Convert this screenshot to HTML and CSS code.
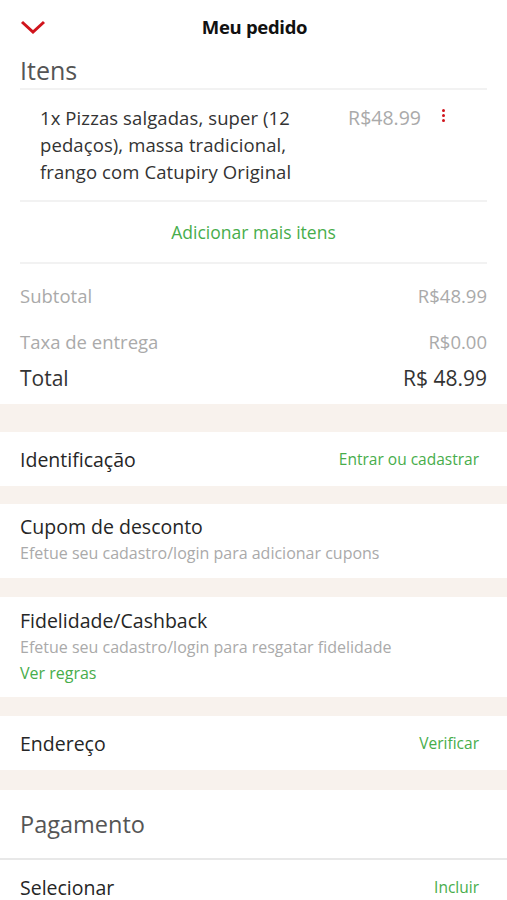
FILE: index.html
```html
<!DOCTYPE html>
<html lang="pt-BR">
<head>
    <meta charset="UTF-8">
    <meta name="viewport" content="width=device-width, initial-scale=1.0">
    <title>Meu pedido</title>
    <link rel="stylesheet" href="styles.css">
</head>
<body>

<header class="topbar">
    <svg class="close-icon" width="26" height="14" viewBox="0 0 26 14">
        <polyline points="2,2 13,12 24,2" fill="none" stroke="#d0141c" stroke-width="3"/>
    </svg>
    <h1>Meu pedido</h1>
</header>

<section class="block items">
    <h2 class="section-title">Itens</h2>
    <div class="item">
        <div class="item-name">1x Pizzas salgadas, super (12 pedaços), massa tradicional, frango com Catupiry Original</div>
        <div class="item-price">R$48.99</div>
        <div class="kebab"><span></span><span></span><span></span></div>
    </div>
    <div class="add-more">Adicionar mais itens</div>

    <div class="totals">
        <div class="line muted"><span>Subtotal</span><span>R$48.99</span></div>
        <div class="line muted"><span>Taxa de entrega</span><span>R$0.00</span></div>
        <div class="line total"><span>Total</span><span>R$ 48.99</span></div>
    </div>
</section>

<section class="block row first">
    <span class="row-title">Identificação</span>
    <span class="action">Entrar ou cadastrar</span>
</section>

<section class="block stack">
    <div class="row-title">Cupom de desconto</div>
    <div class="hint">Efetue seu cadastro/login para adicionar cupons</div>
</section>

<section class="block stack">
    <div class="row-title">Fidelidade/Cashback</div>
    <div class="hint">Efetue seu cadastro/login para resgatar fidelidade</div>
    <div class="link">Ver regras</div>
</section>

<section class="block row">
    <span class="row-title">Endereço</span>
    <span class="action">Verificar</span>
</section>

<section class="block payment">
    <h2 class="section-title">Pagamento</h2>
    <div class="row">
        <span class="row-title">Selecionar</span>
        <span class="action">Incluir</span>
    </div>
</section>

</body>
</html>
```

FILE: styles.css
```css
body {
    margin: 0;
    background-color: #f8f2ed;
    font-family: "Open Sans", Lato, sans-serif;
    color: #262626;
}
.topbar {
    background-color: white;
    height: 52px;
    display: flex;
    align-items: center;
    justify-content: center;
    position: relative;
}
.close-icon {
    position: absolute;
    left: 20px;
    top: 20px;
}
.topbar h1 {
    margin: 0 0 0 2px;
    font-size: 18.5px;
    font-weight: bold;
    color: #111;
    letter-spacing: -0.3px;
}
.block {
    background-color: white;
    padding: 0 20px;
}
.section-title {
    margin: 0;
    font-weight: normal;
    color: #555;
}
.items .section-title {
    font-size: 25px;
    line-height: 36px;
    border-bottom: 2px solid #f2f2f2;
}
.item {
    display: flex;
    align-items: flex-start;
    padding: 14px 0 15px 20px;
    border-bottom: 2px solid #f2f2f2;
}
.item-name {
    width: 275px;
    font-size: 18.5px;
    line-height: 27px;
    color: #333;
    letter-spacing: 0.1px;
}
.item-price {
    margin-left: auto;
    font-size: 19.5px;
    line-height: 27px;
    color: #aaa;
}
.kebab {
    display: flex;
    flex-direction: column;
    gap: 2px;
    width: 66px;
    box-sizing: border-box;
    padding: 5px 0 0 21px;
}
.kebab span {
    width: 3px;
    height: 3px;
    border-radius: 50%;
    background-color: #d0141c;
}
.add-more {
    text-align: center;
    color: #47ad4b;
    font-size: 17.5px;
    line-height: 60px;
    border-bottom: 2px solid #f2f2f2;
}
.totals {
    padding: 9px 0 13px;
}
.line {
    display: flex;
    justify-content: space-between;
    font-size: 18.5px;
}
.line.muted {
    color: #aaa;
    line-height: 46px;
}
.line.total {
    color: #333;
    font-size: 21px;
    line-height: 26px;
}
.row {
    display: flex;
    justify-content: space-between;
    align-items: center;
}
.block.row {
    height: 54px;
    margin-top: 19px;
}
.block.row.first {
    margin-top: 28px;
}
.row-title {
    font-size: 19.5px;
    color: #262626;
}
.action {
    font-size: 15.5px;
    color: #47ad4b;
    padding-right: 8px;
}
.block.stack {
    margin-top: 18px;
    padding-top: 11px;
    padding-bottom: 11px;
}
.stack + .stack {
    margin-top: 19px;
    padding-top: 12px;
    padding-bottom: 12px;
}
.stack .row-title {
    line-height: 24px;
}
.hint {
    font-size: 16px;
    color: #aaa;
    line-height: 28px;
}
.link {
    font-size: 16px;
    color: #47ad4b;
    line-height: 24px;
}
.block.payment {
    margin-top: 20px;
    padding: 0;
}
.payment .section-title {
    font-size: 23.5px;
    padding: 0 20px;
    line-height: 68px;
    border-bottom: 2px solid #e8e8e8;
}
.payment .row {
    padding: 0 20px;
    height: 54px;
}
```
